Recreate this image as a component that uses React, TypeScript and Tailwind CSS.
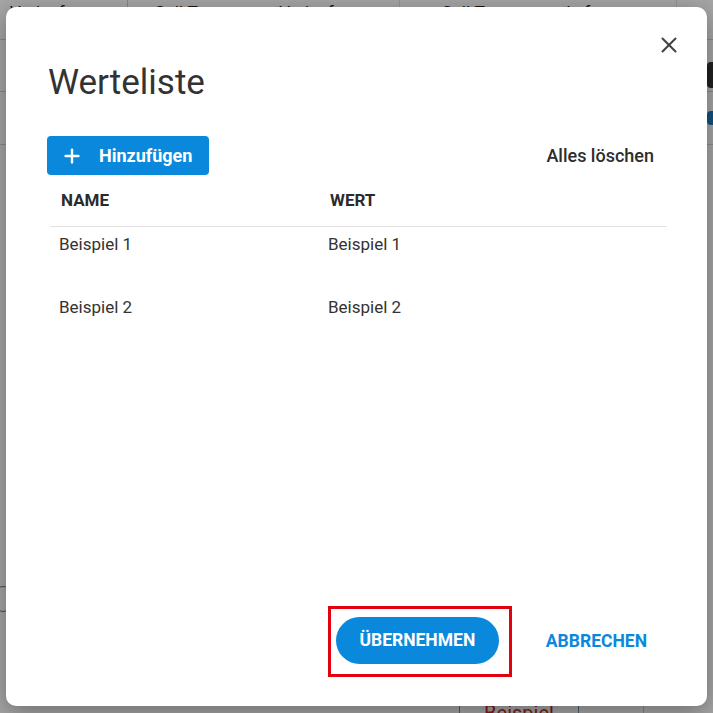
import { X, Plus } from 'lucide-react';

const rows = [
  { name: 'Beispiel 1', value: 'Beispiel 1' },
  { name: 'Beispiel 2', value: 'Beispiel 2' },
];

function BackgroundPage() {
  return (
    <div className="absolute inset-0 bg-white text-[#222]">
      <div className="flex h-[40px] border-b border-[#d6d6d6] text-[17px] leading-none">
        <div className="w-[128px] border-r border-[#cfcfcf] pl-[10px] pt-[4px]">Vorlauftemperatur</div>
        <div className="w-[272px] border-r border-[#e3e3e3] pl-[27px] pt-[4px]">Soll-Temperatur Vorlauf</div>
        <div className="w-[277px] border-r border-[#e3e3e3] pl-[42px] pt-[4px]">Soll-Temperatur Luft</div>
        <div className="flex-1" />
      </div>
      <div className="flex h-[52px] items-end justify-end border-b border-[#d6d6d6]">
        <div className="mb-[3px] h-[26px] w-[6px] rounded-l bg-[#333]" />
      </div>
      <div className="flex h-[53px] items-center justify-end border-b border-[#d6d6d6]">
        <div className="h-[14px] w-[6px] rounded-l bg-[#1f7fc4]" />
      </div>
      <div className="absolute left-[-10px] top-[586px] h-[26px] w-[26px] rounded-full border border-[#777]" />
      <div className="absolute left-[459px] top-[697px] flex h-[40px] w-[120px] justify-center border border-[#7d8da0] text-[20px] text-[#c62828]">
        Beispiel
      </div>
      <div className="absolute left-[643px] top-[690px] h-[30px] border-l border-[#cfcfcf]" />
    </div>
  );
}

export default function App() {
  return (
    <div
      className="relative h-[713px] w-[713px] overflow-hidden"
      style={{ fontFamily: 'Roboto, "Liberation Sans", sans-serif' }}
    >
      <BackgroundPage />
      <div className="absolute inset-0 bg-black/35" />

      <div className="absolute left-[6px] top-[7px] flex h-[699px] w-[701px] flex-col rounded-[10px] bg-white shadow-[0_6px_24px_rgba(0,0,0,0.35)]">
        <button className="absolute right-[25px] top-[25px] text-[#444]">
          <X size={26} strokeWidth={1.9} />
        </button>

        <h2 className="pl-[42px] pt-[56px] text-[35px] leading-[40px] font-normal text-[#333]">Werteliste</h2>

        <div className="mt-[33px] flex items-center justify-between pl-[41px] pr-[53px]">
          <button className="flex h-[39px] w-[162px] items-center gap-[16px] rounded-[4px] bg-[#0a89dc] pl-[14px] text-[18px] font-bold text-white">
            <Plus size={22} strokeWidth={2.6} />
            Hinzufügen
          </button>
          <button className="text-[18px] font-medium text-[#2d2d2d]">Alles löschen</button>
        </div>

        <div className="ml-[44px] mr-[40px] text-[17px] text-[#333]">
          <div className="grid h-[52px] grid-cols-[269px_1fr] items-center border-b border-[#e2e2e2] font-bold text-[#2b2b2b]">
            <div className="pl-[11px]">NAME</div>
            <div className="pl-[11px]">WERT</div>
          </div>
          {rows.map((r, i) => (
            <div key={i} className="grid h-[63px] grid-cols-[269px_1fr] pt-[5px] leading-[24px]">
              <div className="pl-[9px]">{r.name}</div>
              <div className="pl-[9px]">{r.value}</div>
            </div>
          ))}
        </div>

        <div className="mt-auto mb-[29px] flex items-center justify-end pr-[60px]">
          <div className="border-[3px] border-[#e3000f] pb-[10px] pl-[5px] pr-[10px] pt-[8px]">
            <button className="h-[47px] w-[163px] rounded-full bg-[#0a89dc] text-[17.5px] font-bold text-white">
              ÜBERNEHMEN
            </button>
          </div>
          <button className="ml-[34px] text-[17.5px] font-bold text-[#0a89dc]">ABBRECHEN</button>
        </div>
      </div>
    </div>
  );
}
